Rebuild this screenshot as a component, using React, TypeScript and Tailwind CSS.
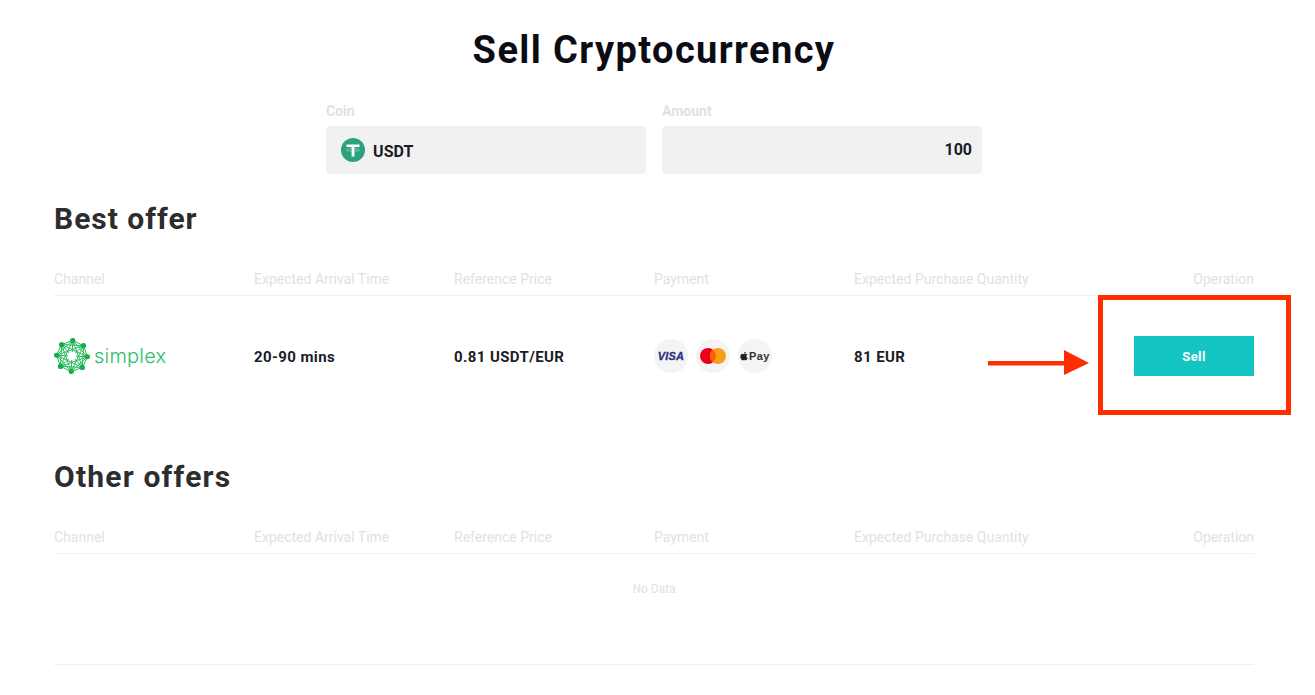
const FONT = "font-['Roboto',_'Liberation_Sans',_sans-serif]";

function SimplexLogo() {
  const pts: [number, number][] = [];
  for (let i = 0; i < 8; i++) {
    const a = (Math.PI * 2 * i) / 8 - Math.PI / 2 + 0.05;
    pts.push([18 + 15.5 * Math.cos(a), 18 + 15.5 * Math.sin(a)]);
  }
  return (
    <div className="flex items-center">
      <svg width="36" height="36" viewBox="0 0 36 36" className="block">
        {pts.map((p, i) =>
          pts.map((q, j) =>
            j > i ? (
              <line key={`${i}-${j}`} x1={p[0]} y1={p[1]} x2={q[0]} y2={q[1]} stroke="#25b95a" strokeWidth="1" />
            ) : null,
          ),
        )}
        {pts.map((p, i) => (
          <circle key={i} cx={p[0]} cy={p[1]} r="2.6" fill="#16ad4c" />
        ))}
        <circle cx="18" cy="18" r="4" fill="#fff" />
      </svg>
      <span className="ml-[4px] font-['Inter',_sans-serif] text-[20px] leading-none font-light tracking-[0.2px] text-[#2cc068]">simplex</span>
    </div>
  );
}

function Tether() {
  return (
    <svg width="24" height="24" viewBox="0 0 24 24" className="block">
      <circle cx="12" cy="12" r="12" fill="#2ba37f" />
      <path d="M5.5 6.5h13v2.6h-5.1v9.4h-2.8V9.1H5.5z" fill="#fff" />
      <ellipse cx="12" cy="12" rx="6.6" ry="1.3" fill="none" stroke="#fff" strokeOpacity="0.6" strokeWidth="0.6" />
    </svg>
  );
}

function Payments() {
  return (
    <div className="flex gap-[8px]">
      <div className="flex h-[34px] w-[34px] items-center justify-center rounded-full bg-[#f4f4f5]">
        <span className="font-['Liberation_Sans',_sans-serif] text-[11px] font-bold italic leading-none tracking-[0.2px] text-[#2a2f7f] [-webkit-text-stroke:0.3px_#2a2f7f]">VISA</span>
      </div>
      <div className="flex h-[34px] w-[34px] items-center justify-center rounded-full bg-[#f4f4f5]">
        <svg width="26" height="16" viewBox="0 0 26 16" className="block">
          <circle cx="8" cy="8" r="8" fill="#eb001b" />
          <circle cx="18" cy="8" r="8" fill="#f79e1b" />
          <path d="M13 1.76a8 8 0 0 1 0 12.48a8 8 0 0 1 0-12.48z" fill="#ff5f00" />
        </svg>
      </div>
      <div className="flex h-[34px] w-[34px] items-center justify-center gap-[1px] rounded-full bg-[#f4f4f5]">
        <svg width="8" height="10" viewBox="0 0 384 512" className="block"><path fill="#222" d="M318.7 268.7c-.2-36.7 16.4-64.4 50-84.8-18.8-26.9-47.2-41.7-84.7-44.6-35.5-2.8-74.3 20.7-88.5 20.7-15 0-49.4-19.7-76.4-19.7C63.3 141.2 4 184.8 4 273.5q0 39.3 14.4 81.2c12.8 36.7 59 126.7 107.2 125.2 25.2-.6 43-17.9 75.8-17.9 31.8 0 48.3 17.9 76.4 17.9 48.6-.7 90.4-82.5 102.6-119.3-65.2-30.7-61.7-90-61.7-91.9zm-56.6-164.2c27.3-32.4 24.8-61.9 24-72.5-24.1 1.4-52 16.4-67.9 34.9-17.5 19.8-27.8 44.3-25.6 71.9 26.1 2 49.9-11.4 69.5-34.3z" /></svg>
        <span className="font-['Liberation_Sans',_sans-serif] text-[11px] leading-none text-[#333]">Pay</span>
      </div>
    </div>
  );
}

function HeaderRow() {
  const cols = ["Channel", "Expected Arrival Time", "Reference Price", "Payment", "Expected Purchase Quantity"];
  return (
    <div className="flex h-[32px] items-start border-b border-[#eff0f3] text-[14px] leading-[18px] text-[#dfe1e8]">
      {cols.map((c) => (
        <div key={c} className="w-[200px] pt-[6px]">{c}</div>
      ))}
      <div className="w-[200px] pt-[6px] text-right">Operation</div>
    </div>
  );
}

export default function App() {
  return (
    <div className={`${FONT} relative h-[695px] w-[1315px] overflow-hidden bg-white text-[#1c1c28]`}>
      <div className="ml-[54px] w-[1200px]">
        <h1 className="pt-[25px] text-center text-[38px] font-bold leading-[50px] tracking-[1.4px] text-[#0c0c14]">Sell Cryptocurrency</h1>

        <div className="mt-[27px] flex justify-center gap-[16px]">
          <div className="w-[320px]">
            <div className="text-[14px] font-bold leading-[18px] text-[#dfe1e8]">Coin</div>
            <div className="mt-[6px] flex h-[48px] items-center rounded-[4px] bg-[#f1f1f1] pl-[15px]">
              <Tether />
              <span className="ml-[8px] pt-[3px] text-[16px] font-bold tracking-[0.1px] text-[#1c1c28]">USDT</span>
            </div>
          </div>
          <div className="w-[320px]">
            <div className="text-[14px] font-bold leading-[18px] text-[#dfe1e8]">Amount</div>
            <div className="mt-[6px] flex h-[48px] items-center justify-end rounded-[4px] bg-[#f1f1f1] pr-[10px]">
              <span className="text-[16px] font-bold text-[#1c1c28]">100</span>
            </div>
          </div>
        </div>

        <h2 className="mt-[25px] text-[30px] font-bold leading-[40px] tracking-[1px] text-[#2d2d2d]">Best offer</h2>
        <div className="mt-[25px]"><HeaderRow /></div>

        <div className="flex h-[120px] items-center text-[15px] font-bold tracking-[0.4px] text-[#1c1c28]">
          <div className="w-[200px]"><SimplexLogo /></div>
          <div className="w-[200px] pt-[2px]">20-90 mins</div>
          <div className="w-[200px] pt-[2px]">0.81 USDT/EUR</div>
          <div className="w-[200px]"><Payments /></div>
          <div className="w-[200px] pt-[2px]">81 EUR</div>
          <div className="flex w-[200px] justify-end">
            <button className="h-[40px] w-[120px] bg-[#14c4c3] pt-[1px] text-[13px] font-bold text-white">Sell</button>
          </div>
        </div>

        <h2 className="mt-[41px] text-[30px] font-bold leading-[40px] tracking-[1.2px] text-[#2d2d2d]">Other offers</h2>
        <div className="mt-[25px]"><HeaderRow /></div>
        <div className="flex h-[111px] items-start justify-center border-b border-[#eff0f3] pt-[27px] text-[12px] leading-[16px] text-[#dfe1e8]">No Data</div>
      </div>

      <div className="absolute left-[1098px] top-[295px] h-[120px] w-[193px] border-[5px] border-[#ff2e00]" />
      <svg className="absolute left-[988px] top-[350px]" width="102" height="26" viewBox="0 0 102 26">
        <rect x="0" y="11" width="78" height="4.5" fill="#ff2e00" />
        <path d="M76 0L101 13L76 25z" fill="#ff2e00" />
      </svg>
    </div>
  );
}
